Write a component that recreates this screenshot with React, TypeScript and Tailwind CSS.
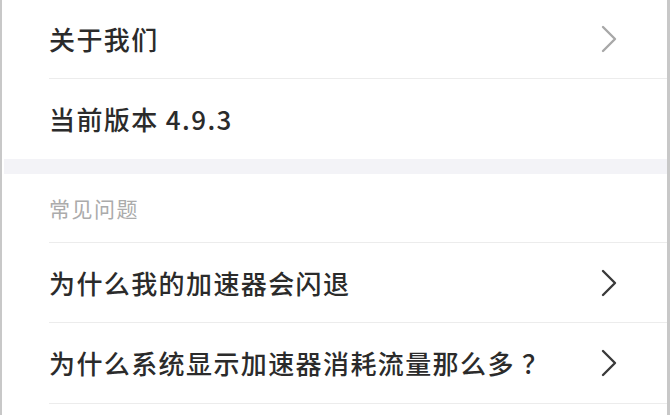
import React from "react";

const font = { fontFamily: '"Noto Sans CJK SC", "Noto Sans", sans-serif' };

function Chevron({ light }: { light?: boolean }) {
  return (
    <svg width="16" height="28" viewBox="0 0 16 28" fill="none" className={light ? "text-[#a8a8a8]" : "text-[#3a3a3a]"}>
      <polyline points="2,2 14,14 2,26" stroke="currentColor" strokeWidth="2.4" strokeLinecap="round" strokeLinejoin="round" />
    </svg>
  );
}

function Row({ label, arrow, light, divider, height }: { label: string; arrow?: boolean; light?: boolean; divider?: boolean; height: string }) {
  return (
    <div className="pl-[47px]">
      <div className={`flex items-center justify-between pr-[50px] ${height} ${divider ? "border-b border-[#ececec]" : ""}`}>
        <span className="text-[26px] font-medium tracking-[1.4px] text-[#2b2b2b] leading-none">{label}</span>
        {arrow && <Chevron light={light} />}
      </div>
    </div>
  );
}

export default function App() {
  return (
    <div className="w-[670px] h-[415px] overflow-hidden bg-white border-l-[2px] border-r-[3px] border-[#c8c8c8]" style={font}>
      {/* 关于 */}
      <Row label="关于我们" arrow light divider height="h-[79px]" />
      <Row label="当前版本 4.9.3" height="h-[80px]" />

      <div className="h-[15px] bg-[#f3f3f7] ml-[2px]" />

      {/* 常见问题 */}
      <div className="pl-[47px]">
        <div className="h-[69px] flex items-center border-b border-[#ececec]">
          <span className="text-[21px] tracking-[1.5px] text-[#ababab] leading-none">常见问题</span>
        </div>
      </div>
      <Row label="为什么我的加速器会闪退" arrow divider height="h-[80px]" />
      <Row label="为什么系统显示加速器消耗流量那么多 ？" arrow divider height="h-[81px]" />
    </div>
  );
}
